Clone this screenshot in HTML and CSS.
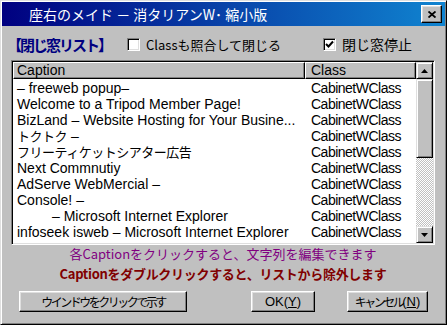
FILE: index.html
```html
<!DOCTYPE html>
<html lang="ja">
<head>
  <meta charset="UTF-8">
  <title>座右のメイド</title>
<link rel="stylesheet" href="styles.css">
</head>
<body>

<div class="window">
  <div class="titlebar">
    <span class="title">座右のメイド － 消タリアンW･ 縮小版</span>
    <div class="close_btn">
      <svg width="8" height="7" viewBox="0 0 8 7"><path d="M0.5 0.5 L7.5 6.5 M7.5 0.5 L0.5 6.5" stroke="#000" stroke-width="1.8" fill="none"/></svg>
    </div>
  </div>

  <div class="content">
    <div class="top_row">
      <span class="list_label">【閉じ窓リスト】</span>
      <label class="check check_class"><span class="box"></span>Classも照合して閉じる</label>
      <label class="check"><span class="box"><svg width="9" height="9" viewBox="0 0 9 9"><path d="M1 4 L3.5 6.5 L8 1.5" stroke="#000" stroke-width="2" fill="none"/></svg></span>閉じ窓停止</label>
    </div>

    <div class="listview">
      <div class="list_main">
        <div class="list_header">
          <div class="hcol hcol_caption">Caption</div>
          <div class="hcol hcol_class">Class</div>
        </div>
        <div class="rows">
          <div class="row"><span class="cell_caption">– freeweb popup–</span><span class="cell_class">CabinetWClass</span></div>
          <div class="row"><span class="cell_caption">Welcome to a Tripod Member Page!</span><span class="cell_class">CabinetWClass</span></div>
          <div class="row"><span class="cell_caption">BizLand – Website Hosting for Your Busine...</span><span class="cell_class">CabinetWClass</span></div>
          <div class="row"><span class="cell_caption"><span class="jp">トクトク</span> –</span><span class="cell_class">CabinetWClass</span></div>
          <div class="row"><span class="cell_caption"><span class="jp">フリーティケットシアター広告</span></span><span class="cell_class">CabinetWClass</span></div>
          <div class="row"><span class="cell_caption">Next Commnutiy</span><span class="cell_class">CabinetWClass</span></div>
          <div class="row"><span class="cell_caption">AdServe WebMercial –</span><span class="cell_class">CabinetWClass</span></div>
          <div class="row"><span class="cell_caption">Console! –</span><span class="cell_class">CabinetWClass</span></div>
          <div class="row"><span class="cell_caption">         – Microsoft Internet Explorer</span><span class="cell_class">CabinetWClass</span></div>
          <div class="row"><span class="cell_caption">infoseek isweb – Microsoft Internet Explorer</span><span class="cell_class">CabinetWClass</span></div>
        </div>
      </div>
      <div class="scrollbar">
        <div class="sb_btn">
          <svg width="7" height="4" viewBox="0 0 7 4"><polygon points="0,4 3.5,0 7,4" fill="#000"/></svg>
        </div>
        <div class="sb_thumb"></div>
        <div class="sb_track"></div>
        <div class="sb_btn">
          <svg width="7" height="4" viewBox="0 0 7 4"><polygon points="0,0 7,0 3.5,4" fill="#000"/></svg>
        </div>
      </div>
    </div>

    <p class="hint">各Captionをクリックすると、文字列を編集できます</p>
    <p class="warn">Captionをダブルクリックすると、リストから除外します</p>

    <div class="buttons">
      <div class="btn btn_show"><span class="kana">ウインドウをクリックで示す</span></div>
      <div class="btn btn_ok">OK(<u>Y</u>)</div>
      <div class="btn btn_cancel"><span class="kana">キャンセル</span>(<u>N</u>)</div>
    </div>
  </div>
</div>

</body>
</html>
```

FILE: styles.css
```css
*{
    padding: 0;
    margin: 0;
    box-sizing: border-box;
}
body{
    background: #c0c0c0;
    font-family: "Noto Sans CJK JP", sans-serif;
}

/* dialog frame */
.window{
    width: 447px;
    height: 325px;
    background: #c0c0c0;
    border: 1px solid;
    border-color: #dfdfdf #000 #000 #dfdfdf;
    box-shadow: inset 1px 1px #fff, inset -1px -1px #808080;
    padding: 1px;
    display: flex;
    flex-direction: column;
}

.titlebar{
    height: 24px;
    background: linear-gradient(to right, #000080, #1084d0);
    display: flex;
    align-items: center;
    padding: 0 3px 0 27px;
}
.title{
    flex: 1;
    color: #fff;
    font-size: 14px;
    line-height: 24px;
    white-space: pre;
}
.close_btn{
    width: 21px;
    height: 18px;
    background: #c0c0c0;
    border: 1px solid;
    border-color: #fff #000 #000 #fff;
    box-shadow: inset -1px -1px #808080, inset 1px 1px #dfdfdf;
    display: flex;
    align-items: center;
    justify-content: center;
}

.content{
    flex: 1;
    padding: 8px 10px 0 9px;
    display: flex;
    flex-direction: column;
}

/* checkbox row */
.top_row{
    height: 20px;
    display: flex;
    align-items: center;
    font-size: 14px;
}
.list_label{
    width: 120px;
    margin-left: -4px;
    color: #000080;
    font-size: 15px;
    font-weight: bold;
    letter-spacing: -2px;
}
.check{
    display: flex;
    align-items: center;
    gap: 6px;
    color: #000;
}
.check_class{
    width: 196px;
    font-size: 13px;
}
.box{
    width: 13px;
    height: 13px;
    background: #fff;
    border: 1px solid;
    border-color: #808080 #fff #fff #808080;
    box-shadow: inset 1px 1px #000, inset -1px -1px #dfdfdf;
    display: flex;
    align-items: center;
    justify-content: center;
}

/* list view */
.listview{
    height: 185px;
    margin-top: 6px;
    display: flex;
    background: #fff;
    border: 1px solid;
    border-color: #808080 #fff #fff #808080;
    box-shadow: inset 1px 1px #000, inset -1px -1px #dfdfdf;
    padding: 1px;
}
.list_main{
    flex: 1;
    min-width: 0;
    display: flex;
    flex-direction: column;
    font-family: "Liberation Sans", "Noto Sans CJK JP", sans-serif;
    font-size: 14px;
}
.list_header{
    display: flex;
    height: 17px;
}
.hcol{
    background: #c0c0c0;
    border: 1px solid;
    border-color: #fff #000 #000 #fff;
    box-shadow: inset -1px -1px #808080;
    line-height: 15px;
}
.hcol_caption{
    width: 292px;
    padding-left: 3px;
}
.hcol_class{
    flex: 1;
    padding-left: 5px;
}
.rows{
    padding-top: 1px;
}
.row{
    display: flex;
    height: 16px;
    line-height: 16px;
    white-space: pre;
    color: #000;
}
.cell_caption{
    width: 292px;
    padding-left: 4px;
    overflow: hidden;
}
.cell_class{
    padding-left: 6px;
    letter-spacing: -0.5px;
}
.jp{
    font-size: 13px;
    letter-spacing: -0.5px;
}

.scrollbar{
    width: 17px;
    display: flex;
    flex-direction: column;
}
.sb_btn, .sb_thumb{
    background: #c0c0c0;
    border: 1px solid;
    border-color: #dfdfdf #000 #000 #dfdfdf;
    box-shadow: inset 1px 1px #fff, inset -1px -1px #808080;
}
.sb_btn{
    height: 17px;
    display: flex;
    align-items: center;
    justify-content: center;
}
.sb_thumb{
    height: 79px;
}
.sb_track{
    flex: 1;
    background: repeating-conic-gradient(#c0c0c0 0% 25%, #fff 0% 50%) 0 0 / 2px 2px;
}

/* messages */
.hint{
    color: #800080;
    font-size: 13px;
    line-height: 18px;
    text-align: center;
}
.warn{
    margin-top: 1px;
    color: #800000;
    font-size: 13px;
    font-weight: bold;
    letter-spacing: -0.3px;
    line-height: 20px;
    text-align: center;
}

/* bottom buttons */
.buttons{
    margin-top: 7px;
    display: flex;
    padding: 0 7px 0 8px;
}
.btn{
    height: 21px;
    background: #c0c0c0;
    border: 1px solid;
    border-color: #fff #000 #000 #fff;
    box-shadow: inset -1px -1px #808080, inset 1px 1px #dfdfdf;
    display: flex;
    align-items: center;
    justify-content: center;
    font-family: "Liberation Sans", "Noto Sans CJK JP", sans-serif;
    font-size: 13px;
    color: #000;
}
.kana{
    font-size: 12px;
    letter-spacing: -2.5px;
}
.btn_show{
    width: 168px;
}
.btn_ok{
    width: 64px;
    margin-left: auto;
}
.btn_cancel{
    width: 81px;
    margin-left: 32px;
}
```
